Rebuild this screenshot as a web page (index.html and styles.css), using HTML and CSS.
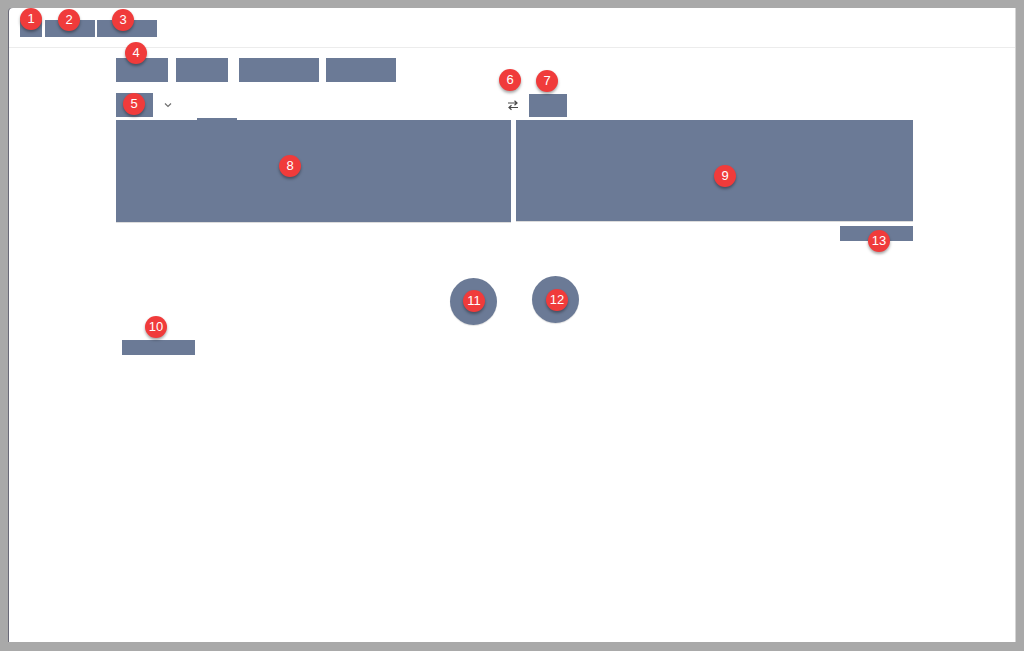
FILE: index.html
```html
<!DOCTYPE html>
<html lang="en">
<head>
    <meta charset="UTF-8">
    <title>Translate</title>
    <link rel="stylesheet" href="styles.css">
</head>
<body>
<div class="window">
    <div class="header">
        <span class="block menu"></span>
        <span class="block logo"></span>
        <span class="block brand"></span>
    </div>
    <div class="main">
        <div class="tabs">
            <span class="block tab t1"></span>
            <span class="block tab t2"></span>
            <span class="block tab t3"></span>
            <span class="block tab t4"></span>
        </div>
        <div class="toolbar">
            <div class="side">
                <span class="block lang"></span>
                <svg class="chev" width="10" height="10" viewBox="0 0 10 10"><path d="M2 3.5 L5 6.5 L8 3.5" fill="none" stroke="#6f6f6f" stroke-width="1.2"/></svg>
            </div>
            <svg class="swap" width="14" height="12" viewBox="0 0 14 12"><path d="M2 4 H11 M8.5 1.8 L11 4 L8.5 6.2 M12 8.5 H3 M5.5 6.3 L3 8.5 L5.5 10.7" fill="none" stroke="#4a4a4a" stroke-width="1.2"/></svg>
            <div class="side right">
                <span class="block target"></span>
            </div>
        </div>
        <div class="indicator"><span class="block bar"></span></div>
        <div class="panels">
            <div class="block panel source"></div>
            <div class="block panel result"></div>
        </div>
        <div class="below">
            <span class="block more"></span>
        </div>
        <div class="actions">
            <span class="block round"></span>
            <span class="block round up"></span>
        </div>
        <span class="block note"></span>
    </div>

    <span class="badge" style="left:11px;top:0">1</span>
    <span class="badge" style="left:49px;top:1px">2</span>
    <span class="badge" style="left:103px;top:1px">3</span>
    <span class="badge" style="left:116px;top:34px">4</span>
    <span class="badge" style="left:114px;top:85px">5</span>
    <span class="badge" style="left:490px;top:61px">6</span>
    <span class="badge" style="left:527px;top:62px">7</span>
    <span class="badge" style="left:270px;top:147px">8</span>
    <span class="badge" style="left:705px;top:157px">9</span>
    <span class="badge" style="left:136px;top:308px">10</span>
    <span class="badge" style="left:454px;top:282px">11</span>
    <span class="badge" style="left:537px;top:281px">12</span>
    <span class="badge" style="left:859px;top:222px">13</span>
</div>
</body>
</html>
```

FILE: styles.css
```css
body {
    margin: 0;
    background-color: #a9a9a9;
    font-family: "Liberation Sans", Arial, sans-serif;
}

div.window {
    position: relative;
    margin: 8px 9px 0 9px;
    height: 634px;
    background-color: #fff;
    border-radius: 4px 0 0 0;
    box-shadow: -1px 0 0 #6a6a78, 1px 0 0 #d4d4d4, 0 1px 0 #d4d4d4;
}

.block {
    display: block;
    background-color: #6b7a96;
}

div.header {
    height: 40px;
    box-sizing: border-box;
    padding: 12px 0 0 11px;
    display: flex;
    align-items: flex-start;
    border-bottom: 1px solid #ececec;
}

.menu { width: 22px; height: 17px; }
.logo { width: 50px; height: 17px; margin-left: 3px; }
.brand { width: 60px; height: 17px; margin-left: 2px; }

div.main {
    padding: 10px 0 0 107px;
    width: 797px;
}

div.tabs {
    display: flex;
    height: 24px;
}

.tab { height: 24px; }
.t1 { width: 52px; }
.t2 { width: 52px; margin-left: 8px; }
.t3 { width: 80px; margin-left: 11px; }
.t4 { width: 70px; margin-left: 7px; }

div.toolbar {
    margin-top: 11px;
    height: 24px;
    display: flex;
    align-items: center;
}

div.toolbar .side {
    display: flex;
    align-items: center;
    height: 24px;
}

.lang { width: 37px; height: 24px; }
.chev { margin-left: 10px; }

.swap { margin-left: 333px; }

div.toolbar .right { margin-left: 9px; }
.target { width: 38px; height: 23px; }

div.indicator {
    height: 3px;
    display: flex;
    align-items: flex-end;
}

.bar { width: 40px; height: 2px; margin-left: 81px; }

div.panels {
    display: flex;
    align-items: flex-start;
}

.panel { box-shadow: 0 1px 0 #dcdcdc; }
.source { width: 395px; height: 102px; }
.result { width: 397px; height: 101px; margin-left: 5px; }

div.below {
    display: flex;
    justify-content: flex-end;
    margin-top: 4px;
}

.more { width: 73px; height: 15px; }

div.actions {
    display: flex;
    justify-content: center;
    margin-top: 37px;
    height: 48px;
}

.round {
    width: 47px;
    height: 47px;
    border-radius: 50%;
    box-shadow: 0 1px 1px rgba(0,0,0,.12);
}

.round.up { margin-left: 35px; margin-top: -2px; }

.note {
    width: 73px;
    height: 15px;
    margin: 14px 0 0 6px;
}

.badge {
    position: absolute;
    width: 22px;
    height: 22px;
    border-radius: 50%;
    background-color: #f03b3b;
    color: #fff;
    font-size: 13px;
    line-height: 22px;
    text-align: center;
    box-shadow: 0 2px 3px rgba(0,0,0,.35);
}
```
